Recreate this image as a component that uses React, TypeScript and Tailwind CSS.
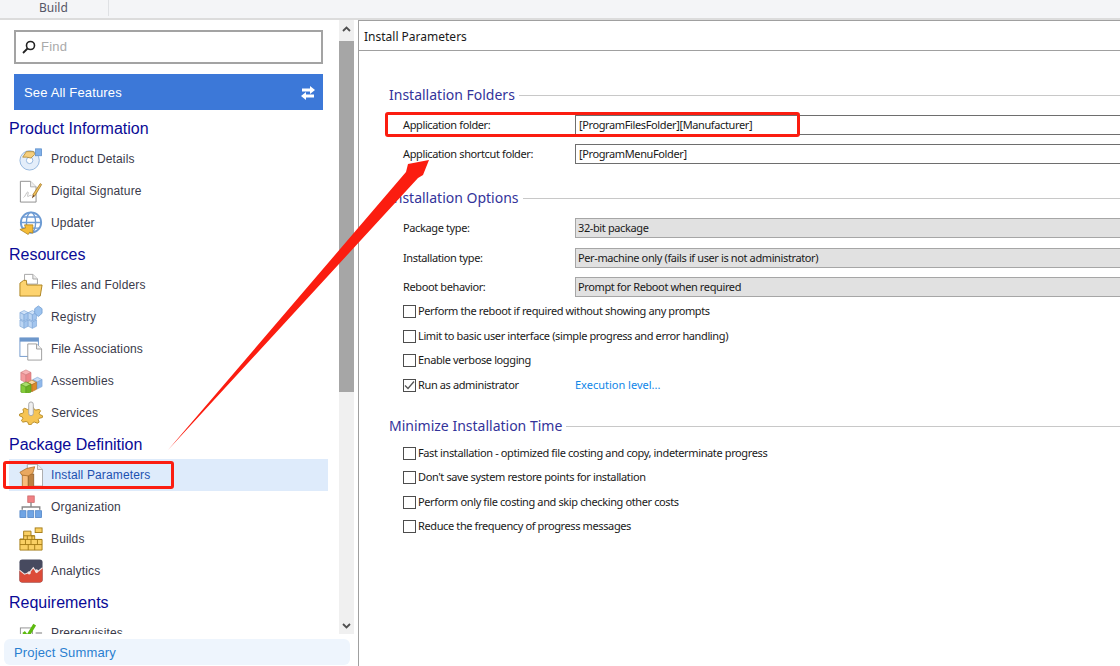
import type { ReactNode } from 'react';

const uiFont = "font-['Liberation_Sans',Arial,sans-serif]";

function Icon({ children }: { children: ReactNode }) {
  return (
    <svg width="24" height="24" viewBox="0 0 26 26" className="shrink-0">
      {children}
    </svg>
  );
}

// small isometric block, used by the registry and assemblies icons
function Cube({ x, y, s, top, left, right, line }: { x: number; y: number; s: number; top: string; left: string; right: string; line: string }) {
  const h = s / 2;
  return (
    <g stroke={line} strokeWidth="0.7" strokeLinejoin="round">
      <path d={`M${x} ${y + h / 2}L${x + h} ${y}L${x + s} ${y + h / 2}L${x + h} ${y + h}z`} fill={top} />
      <path d={`M${x} ${y + h / 2}L${x + h} ${y + h}V${y + s + h / 2}L${x} ${y + s}z`} fill={left} />
      <path d={`M${x + s} ${y + h / 2}L${x + h} ${y + h}V${y + s + h / 2}L${x + s} ${y + s}z`} fill={right} />
    </g>
  );
}

const gearPoints = Array.from({ length: 32 }, (_, i) => {
  const a = (i * Math.PI * 2) / 32;
  const r = i % 4 < 2 ? 12.5 : 9.5;
  return `${(13 + r * Math.cos(a)).toFixed(1)},${(16 + r * 0.78 * Math.sin(a)).toFixed(1)}`;
}).join(' ');

const icons: Record<string, ReactNode> = {
  details: (
    <Icon>
      <circle cx="11.500" cy="14.500" r="10.500" fill="#e4eefa" stroke="#8fb3dc" />
      <circle cx="11.500" cy="14.500" r="3.500" fill="#fff" stroke="#8fb3dc" />
      <path d="M4 11l4-6h8l1 3-4 4-5-1z" fill="#f6cf7d" stroke="#a5812f" strokeWidth="0.8" />
      <rect x="18" y="2" width="6.500" height="7.500" fill="#7fb0ea" stroke="#5a8cc8" strokeWidth="0.8" />
    </Icon>
  ),
  signature: (
    <Icon>
      <path d="M1.500 2.500h11l6 6v16.500h-17z" fill="#fff" stroke="#8a8a8a" />
      <path d="M12.500 2.500v6h6" fill="#eee" stroke="#aaa" />
      <path d="M5 20c2-1 3-6 4.500-6s-1 5 0 5 2-2 4-1" fill="none" stroke="#bbb" />
      <path d="M15 17l8-12 1.500 1-7.500 12.500z" fill="#f2c25c" stroke="#9b6f1d" strokeWidth="0.8" />
      <path d="M15 17l-1 4 3-2.500z" fill="#6b3c10" />
    </Icon>
  ),
  updater: (
    <Icon>
      <circle cx="13" cy="12.500" r="11" fill="#fff" stroke="#6d9bd3" strokeWidth="2" />
      <ellipse cx="13" cy="12.500" rx="5" ry="11" fill="none" stroke="#6d9bd3" strokeWidth="1.500" />
      <path d="M2 12.500h22M4 6.500h18M4 18.500h18" stroke="#6d9bd3" strokeWidth="1.500" />
      <path d="M1 20l6-1.500-1-3.500h9v9l-3.500-1-1.500 2.500z" fill="#f5bc38" stroke="#a9801d" strokeWidth="0.8" />
    </Icon>
  ),
  files: (
    <Icon>
      <path d="M6 12V1.500h9l5 5V12z" fill="#fff" stroke="#a2a2a2" />
      <path d="M15 1.500v5h5" fill="#eee" stroke="#a2a2a2" />
      <path d="M1 25V11l4-3h3l.5 5H25l-2 12z" fill="#fdd36f" stroke="#a9801d" />
    </Icon>
  ),
  registry: (
    <Icon>
      <Cube x={1} y={14} s={9} top="#cfe2f8" left="#bdd6f3" right="#a3c5ee" line="#7fa8d8" />
      <Cube x={10} y={14} s={9} top="#cfe2f8" left="#bdd6f3" right="#a3c5ee" line="#7fa8d8" />
      <Cube x={1} y={6} s={9} top="#cfe2f8" left="#bdd6f3" right="#a3c5ee" line="#7fa8d8" />
      <Cube x={10} y={6} s={9} top="#cfe2f8" left="#bdd6f3" right="#a3c5ee" line="#7fa8d8" />
      <path d="M21 1l4 3v5l-4 3.500-4-3.500V4z" fill="#9cc3ef" stroke="#6e9bd0" strokeWidth="0.8" />
    </Icon>
  ),
  associations: (
    <Icon>
      <rect x="1" y="1" width="20" height="20" fill="#fff" stroke="#6d97cb" />
      <rect x="1" y="1" width="20" height="4" fill="#6d97cb" />
      <path d="M9.500 7.500h9.500l5.500 5.500v12h-15z" fill="#fff" stroke="#9a9a9a" />
      <path d="M19 7.500V13h5.500" fill="#f0f0f0" stroke="#9a9a9a" />
    </Icon>
  ),
  assemblies: (
    <Icon>
      <Cube x={2} y={1} s={11} top="#f8b4b6" left="#f39a9d" right="#ee8488" line="#cf7c7e" />
      <Cube x={15} y={9} s={10} top="#c9def6" left="#a9cbf1" right="#8fb8ea" line="#7fa6d6" />
      <Cube x={9} y={12} s={10} top="#f6d9a2" left="#f0a23e" right="#dc8a28" line="#b56d1c" />
      <Cube x={2} y={14} s={11} top="#a9de6c" left="#84cb3a" right="#6cb325" line="#5a9a20" />
    </Icon>
  ),
  services: (
    <Icon>
      <polygon points={gearPoints} fill="#f6c453" stroke="#b48a25" strokeLinejoin="round" />
      <rect x="10.500" y="1" width="5" height="15" rx="2.500" fill="#efefef" stroke="#a5a5a5" />
    </Icon>
  ),
  install: (
    <Icon>
      <path d="M9 1.500h11l5.500 5.500v18H9z" fill="#fff" stroke="#a5a5a5" />
      <path d="M20 1.500V7h5.500" fill="#eee" stroke="#a5a5a5" />
      <rect x="3.500" y="13" width="6.500" height="13" fill="#f9bd7c" stroke="#a86b24" strokeWidth="0.8" />
      <rect x="10" y="12" width="6" height="14" fill="#bd8142" stroke="#8b5a26" strokeWidth="0.8" />
      <path d="M1 10l7-4 9-2-2 7-5 3-7-1z" fill="#e9a85f" stroke="#a86b24" strokeWidth="0.8" />
    </Icon>
  ),
  organization: (
    <Icon>
      <rect x="9.500" y="1" width="7" height="7" fill="#f08184" stroke="#c96366" strokeWidth="0.8" />
      <path d="M13 8v5M3.500 16v-3h19v3" fill="none" stroke="#888" strokeWidth="1.500" />
      <rect x="1" y="17" width="6.500" height="7.500" fill="#6fa4e4" stroke="#4d82c4" strokeWidth="0.8" />
      <rect x="9.500" y="17" width="6.500" height="7.500" fill="#6fa4e4" stroke="#4d82c4" strokeWidth="0.8" />
      <rect x="18" y="17" width="6.500" height="7.500" fill="#6fa4e4" stroke="#4d82c4" strokeWidth="0.8" />
    </Icon>
  ),
  builds: (
    <Icon>
      <rect x="17.500" y="1" width="7.500" height="5" fill="#fad064" stroke="#a47b15" />
      <path d="M5 4.500h8v5h4v4h8v11.500H1V13h4z" fill="#fad064" stroke="#a47b15" />
      <path d="M1 13.500h24M1 19h24M5 9.500h12M9 9.500v4M14 9.500v4M7 13.500v5.500M13 13.500v5.500M20 13.500v5.500M10 19v6M17 19v6" stroke="#a47b15" fill="none" />
    </Icon>
  ),
  analytics: (
    <Icon>
      <rect x="0.500" y="0.500" width="25" height="25" rx="3" fill="#474a5f" />
      <path d="M0.500 12l5.500 4.500 5.500-2 4-5 3.500 5 6.500-5v13a3 3 0 0 1-3 3h-19a3 3 0 0 1-3-3z" fill="#dc4b38" />
      <path d="M0.500 12l5.500 4.500 5.500-2 4-5 3.500 5 6.500-5" fill="none" stroke="#f1e4e2" strokeWidth="1.200" />
      <circle cx="11" cy="15" r="1.800" fill="#f1e4e2" />
      <circle cx="19" cy="13" r="1.800" fill="#f1e4e2" />
    </Icon>
  ),
  prerequisites: (
    <Icon>
      <rect x="1.500" y="7.500" width="13" height="12" fill="#fff" stroke="#8e8e8e" />
      <path d="M5 12l4 5 8-13" fill="none" stroke="#5dba10" strokeWidth="3.500" />
      <path d="M18 13h7M18 19h7" stroke="#a8a8a8" strokeWidth="1.500" />
    </Icon>
  ),
};

const navGroups = [
  {
    title: 'Product Information',
    items: [
      ['details', 'Product Details'],
      ['signature', 'Digital Signature'],
      ['updater', 'Updater'],
    ],
  },
  {
    title: 'Resources',
    items: [
      ['files', 'Files and Folders'],
      ['registry', 'Registry'],
      ['associations', 'File Associations'],
      ['assemblies', 'Assemblies'],
      ['services', 'Services'],
    ],
  },
  {
    title: 'Package Definition',
    items: [
      ['install', 'Install Parameters'],
      ['organization', 'Organization'],
      ['builds', 'Builds'],
      ['analytics', 'Analytics'],
    ],
  },
  {
    title: 'Requirements',
    items: [['prerequisites', 'Prerequisites']],
  },
];

function Sidebar() {
  return (
    <div className={`relative flex w-[358px] shrink-0 flex-col ${uiFont}`}>
      <div className="flex min-h-0 flex-1">
        <div className="min-w-0 flex-1 overflow-hidden">
          <div className="ml-[14px] mr-[16px] mt-[10px] flex h-[34px] items-center gap-[5px] border-2 border-[#a3a3a3] bg-white pl-[6px]">
            <svg width="14" height="14" viewBox="0 0 14 14">
              <circle cx="8.500" cy="5.500" r="4" fill="none" stroke="#222" strokeWidth="1.600" />
              <path d="M5.500 8.500L1 13" stroke="#222" strokeWidth="1.800" />
            </svg>
            <span className="text-[13px] tracking-[0.2px] text-[#aaaaaa]">Find</span>
          </div>
          <div className="ml-[14px] mr-[16px] mt-[10px] flex h-9 items-center justify-between bg-[#3c78d8] pl-[10px] pr-[7px] pt-px text-[13px] tracking-[0.15px] text-white">
            <span>See All Features</span>
            <svg width="16" height="16" viewBox="0 0 16 16" fill="#fff">
              <path d="M2 3.500h8V1l5 4-5 4V6.500H2z" />
              <path d="M14 9.500H6V7L1 11l5 4v-2.500h8z" />
            </svg>
          </div>
          <div className="mt-[3px]">
            {navGroups.map((group) => (
              <div key={group.title}>
                <div className="flex h-[30px] items-center pl-[9px] pt-[2px] text-[16px] text-[#0a0a96]">{group.title}</div>
                {group.items.map(([icon, label]) => {
                  const active = label === 'Install Parameters';
                  return (
                    <div
                      key={label}
                      className={`ml-[9px] mr-[11px] flex h-8 items-center gap-[8px] pl-[10px] text-[12px] tracking-[0.15px] ${
                        active ? 'bg-[#deebfb] text-[#1c50b0]' : 'text-[#3a3a4a]'
                      }`}
                    >
                      {icons[icon]}
                      <span>{label}</span>
                    </div>
                  );
                })}
              </div>
            ))}
          </div>
        </div>
        <div className="mr-[4px] flex w-[15px] shrink-0 flex-col bg-[#f0f0f0]">
          <div className="flex h-[21px] items-center justify-center pb-[3px]">
            <svg width="9" height="6" viewBox="0 0 9 6" fill="none" stroke="#505050" strokeWidth="1.800">
              <path d="M1 5l3.500-3.500L8 5" />
            </svg>
          </div>
          <div className="h-[351px] bg-[#a6a6a6]" />
          <div className="flex-1" />
          <div className="flex h-[16px] items-center justify-center">
            <svg width="9" height="6" viewBox="0 0 9 6" fill="none" stroke="#505050" strokeWidth="1.800">
              <path d="M1 1l3.500 3.500L8 1" />
            </svg>
          </div>
        </div>
      </div>
      <div className="h-[32px] shrink-0 bg-white px-[4px] pt-[5px]">
        <div className="flex h-[26px] w-[346px] items-center rounded-md bg-[#eef5fd] pl-[10px] pt-px text-[13px] tracking-[0.15px] text-[#2a7fd0]">
          Project Summary
        </div>
      </div>
    </div>
  );
}

function SectionTitle({ title, className }: { title: string; className: string }) {
  return (
    <div className={`flex items-center gap-[4px] ${className}`}>
      <span className="text-[14px] leading-[20px] text-[#33339a]">{title}</span>
      <div className="h-px flex-1 bg-[#c8c8c8]" />
    </div>
  );
}

function Field({ label, value, className }: { label: string; value: string; className: string }) {
  return (
    <div className={`flex h-5 items-center tracking-[-0.38px] ${className}`}>
      <span className="w-[172px] shrink-0 text-[11px] text-[#1a1a1a]">{label}</span>
      <div className="flex h-5 flex-1 items-center border border-r-0 border-[#6e6e6e] bg-white pl-[3px] text-[11px] text-[#1a1a1a]">
        {value}
      </div>
    </div>
  );
}

function SelectRow({ label, value, className }: { label: string; value: string; className: string }) {
  return (
    <div className={`flex h-5 items-center tracking-[-0.38px] ${className}`}>
      <span className="w-[172px] shrink-0 text-[11px] text-[#1a1a1a]">{label}</span>
      <div className="flex h-5 flex-1 items-center border border-r-0 border-[#a6a6a6] bg-[#e1e1e1] pl-[2px] text-[11px] text-[#1a1a1a]">
        {value}
      </div>
    </div>
  );
}

function Check({ label, checked, link, className }: { label: string; checked?: boolean; link?: string; className: string }) {
  return (
    <div className={`flex h-[14px] items-center text-[11px] text-[#1a1a1a] ${className}`}>
      <div className="mr-[2px] flex h-[13px] w-[13px] shrink-0 items-center justify-center border border-[#4d4d4d] bg-white">
        {checked && (
          <svg width="11" height="11" viewBox="0 0 11 11" fill="none" stroke="#555" strokeWidth="1.300">
            <path d="M1 5.500l3 3 6-7" />
          </svg>
        )}
      </div>
      <span className={`tracking-[-0.38px] ${link ? 'w-[157px]' : ''}`}>{label}</span>
      {link && <span className="text-[#0f86e8]">{link}</span>}
    </div>
  );
}

function InstallPanel() {
  return (
    <div className="flex min-w-0 flex-1 flex-col border-l border-[#a0a0a0] bg-white font-['Noto_Sans',sans-serif]">
      <div className="flex h-[31px] shrink-0 items-center border-y border-[#a0a0a0] pl-[5px] pt-[2px] text-[12px] text-[#1a1a1a]">
        Install Parameters
      </div>
      <div className="pl-[30px]">
        <SectionTitle title="Installation Folders" className="mt-[34px]" />
        <Field label="Application folder:" value="[ProgramFilesFolder][Manufacturer]" className="ml-[14px] mt-[10px]" />
        <Field label="Application shortcut folder:" value="[ProgramMenuFolder]" className="ml-[14px] mt-[9px]" />
        <SectionTitle title="Installation Options" className="mt-[24px]" />
        <SelectRow label="Package type:" value="32-bit package" className="ml-[14px] mt-[10px]" />
        <SelectRow label="Installation type:" value="Per-machine only (fails if user is not administrator)" className="ml-[14px] mt-[10px]" />
        <SelectRow label="Reboot behavior:" value="Prompt for Reboot when required" className="ml-[14px] mt-[9px]" />
        <Check label="Perform the reboot if required without showing any prompts" className="ml-[14px] mt-[7px]" />
        <Check label="Limit to basic user interface (simple progress and error handling)" className="ml-[14px] mt-[11px]" />
        <Check label="Enable verbose logging" className="ml-[14px] mt-[10px]" />
        <Check label="Run as administrator" checked link="Execution level..." className="ml-[14px] mt-[11px]" />
        <SectionTitle title="Minimize Installation Time" className="mt-[24px]" />
        <Check label="Fast installation - optimized file costing and copy, indeterminate progress" className="ml-[14px] mt-[10px]" />
        <Check label="Don't save system restore points for installation" className="ml-[14px] mt-[10px]" />
        <Check label="Perform only file costing and skip checking other costs" className="ml-[14px] mt-[11px]" />
        <Check label="Reduce the frequency of progress messages" className="ml-[14px] mt-[10px]" />
      </div>
    </div>
  );
}

export default function App() {
  return (
    <div className="relative flex h-[666px] w-[1120px] flex-col overflow-hidden bg-white">
      <div className="flex h-5 shrink-0 border-b-2 border-[#dcdcdc] bg-[#f4f5f7]">
        <div className="flex h-[16px] w-[109px] items-center border-r border-[#dfe1e4] pl-[39px] font-['Noto_Sans',sans-serif] text-[12px] text-[#555566]">
          Build
        </div>
      </div>
      <div className="flex min-h-0 flex-1">
        <Sidebar />
        <InstallPanel />
      </div>

      {/* red annotations drawn on top of the screenshot */}
      <div className="absolute left-[3px] top-[461px] h-[28px] w-[171px] rounded-[3px] border-[3px] border-[#fb1d10]" />
      <div className="absolute left-[385px] top-[112px] h-[25px] w-[415px] rounded-[3px] border-[3px] border-[#fb1d10]" />
      <svg className="pointer-events-none absolute left-0 top-0" width="1120" height="666" viewBox="0 0 1120 666">
        <polygon points="168,450 406,172 408,164 429,160 423,175 418,178" fill="#fb1d10" />
      </svg>
    </div>
  );
}
